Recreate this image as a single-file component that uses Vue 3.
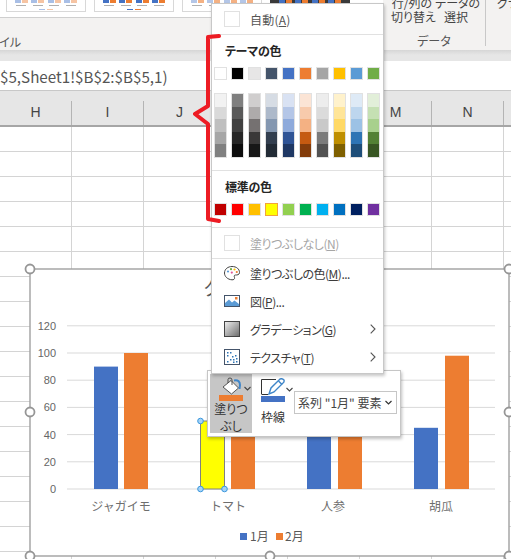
<script setup>
const thumbs = [
  { id: 1, dark: false, a: '#a9bfe6', b: '#f6c4a3' },
  { id: 2, dark: false, a: '#4472c4', b: '#ed7d31' },
  { id: 3, dark: false, a: '#b4c6e7', b: '#f4b183' },
  { id: 4, dark: true, a: '#4472c4', b: '#ed7d31' }
]
const pairs = [0, 1, 2, 3]
const columns = [
  { n: 'H', sep: true }, { n: 'I', sep: true }, { n: 'J', sep: true }, { n: 'K', sep: true },
  { n: 'L', sep: true }, { n: 'M', sep: true }, { n: 'N', sep: true }, { n: 'O', sep: false }
]
const themeColors = ['#ffffff', '#000000', '#e7e6e6', '#44546a', '#4472c4', '#ed7d31', '#a5a5a5', '#ffc000', '#5b9bd5', '#70ad47']
const shades = [
  ['#f2f2f2', '#d9d9d9', '#bfbfbf', '#a6a6a6', '#808080'],
  ['#7f7f7f', '#595959', '#404040', '#262626', '#0d0d0d'],
  ['#d0cece', '#aeabab', '#757171', '#3a3838', '#171717'],
  ['#d6dce4', '#adb9ca', '#8497b0', '#333f4f', '#222b35'],
  ['#d9e2f3', '#b4c6e7', '#8eaadb', '#2f5496', '#1f3864'],
  ['#fbe4d5', '#f7caac', '#f4b183', '#c55a11', '#833c0b'],
  ['#ededed', '#dbdbdb', '#c9c9c9', '#7b7b7b', '#525252'],
  ['#fff2cc', '#ffe598', '#ffd966', '#bf8f00', '#7f6000'],
  ['#deeaf6', '#bdd6ee', '#9cc2e5', '#2e75b5', '#1e4e79'],
  ['#e2efd9', '#c5e0b3', '#a8d08d', '#538135', '#385623']
]
const standard = ['#c00000', '#ff0000', '#ffc000', '#ffff00', '#92d050', '#00b050', '#00b0f0', '#0070c0', '#002060', '#7030a0']
const ticks = [120, 100, 80, 60, 40, 20, 0]
const y = v => 489 - v * 1.36
const cats = [
  { name: 'ジャガイモ', cx: 121, ax: 94, bx: 124, a: 90, b: 100 },
  { name: 'トマト', cx: 228, ax: 200.5, bx: 231, a: 50, b: 60 },
  { name: '人参', cx: 333, ax: 307, bx: 338, a: 80, b: 65 },
  { name: '胡瓜', cx: 441, ax: 414, bx: 445, a: 45, b: 98 }
]
const handles = [[30, 269], [30, 412], [30, 556], [270, 556], [509, 269], [509, 412], [509, 556]]
</script>

<template>
  <div class="page">
    <header class="ribbon">
      <div class="ribbon-left">
        <div class="gallery">
          <div v-for="t in thumbs" :key="t.id" class="thumb" :class="{ dark: t.dark }">
            <div class="bars">
              <div v-for="p in pairs" :key="p" class="pair">
                <i :style="{ background: t.a }"></i><i :style="{ background: t.b }"></i>
              </div>
            </div>
            <div class="axis">
              <b v-for="p in pairs" :key="p"></b>
            </div>
            <div class="legend-mini">
              <i :style="{ background: t.a }"></i><i :style="{ background: t.b }"></i>
            </div>
          </div>
        </div>
        <div class="group-label left-label">スタイル</div>
      </div>
      <div class="data-group">
        <div class="cmds">
          <div class="cmd">行/列の<br />切り替え</div>
          <div class="cmd">データの<br />選択</div>
        </div>
        <div class="group-label">データ</div>
      </div>
      <div class="chart-group">グラフの種類<br />の変更</div>
    </header>
    <div class="ribbon-shadow"></div>
    <div class="formula">$5,Sheet1!$B$2:$B$5,1)</div>
    <div class="colhead">
      <div v-for="c in columns" :key="c.n" class="colname" :class="{ sep: c.sep }">{{ c.n }}</div>
    </div>
    <div class="sheet"></div>

    <svg class="chart" viewBox="30 269 479 287" width="479" height="287">
      <rect x="30" y="269" width="479" height="287" fill="#fff" stroke="#a0a0a0" stroke-width="1.4" />
      <text x="204" y="295" class="title">グラフ タイトル</text>
      <g v-for="t in ticks" :key="t">
        <line x1="67" x2="495" :y1="y(t)" :y2="y(t)" stroke="#d9d9d9" stroke-width="1" />
        <text x="56" :y="y(t) + 4" text-anchor="end" class="tick">{{ t }}</text>
      </g>
      <g v-for="(c, i) in cats" :key="c.name">
        <rect :x="c.ax" :y="y(c.a)" width="24" :height="c.a * 1.36" :fill="i === 1 ? '#ffff00' : '#4472c4'"
          :stroke="i === 1 ? '#808080' : 'none'" />
        <rect :x="c.bx" :y="y(c.b)" width="24" :height="c.b * 1.36" fill="#ed7d31" />
        <text :x="c.cx" y="511" text-anchor="middle" class="cat">{{ c.name }}</text>
      </g>
      <rect x="240" y="533" width="7" height="7" fill="#4472c4" />
      <text x="250" y="541" class="cat legend-text">1月</text>
      <rect x="276" y="533" width="7" height="7" fill="#ed7d31" />
      <text x="285" y="541" class="cat legend-text">2月</text>
      <circle v-for="(h, i) in handles" :key="i" :cx="h[0]" :cy="h[1]" r="4.5" fill="#fff" stroke="#969696" stroke-width="1.8" />
      <circle cx="200.5" cy="421" r="2.8" fill="#a5d3f8" stroke="#3b98dc" />
      <circle cx="200.5" cy="489" r="2.8" fill="#a5d3f8" stroke="#3b98dc" />
      <circle cx="224.5" cy="489" r="2.8" fill="#a5d3f8" stroke="#3b98dc" />
    </svg>

    <div class="minibar">
      <div class="fillbtn">
        <div class="iconline fill-icon">
          <svg width="22" height="18" viewBox="0 0 22 18">
            <path d="M2 10 L10 3.5 L17.5 11 L10.5 17 Z" fill="#fff" stroke="#444" stroke-width=".9" />
            <path d="M7 6 V2.5 Q7 1 9 1 Q11 1 11 3 V8" fill="none" stroke="#444" stroke-width=".9" />
            <path d="M13 3.5 Q19 2.5 19 8 L18.5 12" fill="none" stroke="#3f86c9" stroke-width="2" />
          </svg>
          <svg class="chev" width="7" height="5" viewBox="0 0 7 5"><path d="M.5 1 L3.5 4 L6.5 1" fill="none" stroke="#444" stroke-width="1.1" /></svg>
        </div>
        <div class="colorbar orange"></div>
        <div class="btn-text fill-text">塗りつ<br />ぶし</div>
      </div>
      <div class="linebtn">
        <div class="iconline">
          <svg width="24" height="17" viewBox="0 0 24 17">
            <path d="M.5 16 V1.5 H15 M.5 16.5 H7" fill="none" stroke="#333" stroke-width="1" />
            <path d="M8 16 L10 10 L19 1 Q21 0 23 2 Q23.5 4 22 5 L13 14 Z" fill="#fff" stroke="#3f86c9" stroke-width="1.4" />
            <path d="M17.5 3 L21 6.5" stroke="#3f86c9" stroke-width="1.4" />
          </svg>
          <svg class="chev" width="7" height="5" viewBox="0 0 7 5"><path d="M.5 1 L3.5 4 L6.5 1" fill="none" stroke="#444" stroke-width="1.1" /></svg>
        </div>
        <div class="colorbar blue"></div>
        <div class="btn-text line-label">枠線</div>
      </div>
      <div class="series">
        <span>系列 "1月" 要素</span>
        <svg width="7" height="5" viewBox="0 0 7 5"><path d="M.5 1 L3.5 4 L6.5 1" fill="none" stroke="#333" stroke-width="1.2" /></svg>
      </div>
    </div>

    <div class="menu">
      <div class="row auto first">
        <span class="blank"></span><span>自動(<u>A</u>)</span>
      </div>
      <div class="rule"></div>
      <div class="heading">テーマの色</div>
      <div class="swatches">
        <span v-for="c in themeColors" :key="c" class="swatch" :style="{ background: c }"></span>
      </div>
      <div class="shades">
        <div v-for="(col, i) in shades" :key="i" class="shade-col">
          <span v-for="s in col" :key="s" :style="{ background: s }"></span>
        </div>
      </div>
      <div class="rule rule-after-shades"></div>
      <div class="heading">標準の色</div>
      <div class="swatches">
        <span v-for="c in standard" :key="c" class="swatch" :class="{ picked: c === '#ffff00' }" :style="{ background: c }"></span>
      </div>
      <div class="rule rule-after-std"></div>
      <div class="row auto disabled">
        <span class="blank"></span><span>塗りつぶしなし(<u>N</u>)</span>
      </div>
      <div class="rule"></div>
      <div class="row">
        <svg width="16" height="16" viewBox="0 0 16 16">
          <path d="M8 1.5 C12.5 1.5 15.5 4 15.5 7.5 C15.5 10 13 10 11.5 10 C10 10 10 11.5 10.5 12.5 C11 14 9.5 15 8 14.8 C3.5 14.5 .5 11.5 .5 8 C.5 4 4 1.5 8 1.5 Z" fill="#fff" stroke="#444" stroke-width="1" />
          <circle cx="4" cy="6.5" r="1.1" fill="#5b9bd5" /><circle cx="7" cy="4.2" r="1.1" fill="#70ad47" />
          <circle cx="10.5" cy="4.5" r="1.1" fill="#ffc000" /><circle cx="12.8" cy="7" r="1.1" fill="#ed7d31" />
          <circle cx="7.8" cy="7.6" r="1.1" fill="#e0559b" />
        </svg>
        <span>塗りつぶしの色(<u>M</u>)...</span>
      </div>
      <div class="row">
        <svg width="16" height="16" viewBox="0 0 16 16">
          <rect x=".5" y="2.5" width="15" height="11" fill="#fff" stroke="#44546a" />
          <path d="M1 13 V10 L5 6.5 L8 9.5 L10.5 7.5 L15 11 V13 Z" fill="#5b9bd5" />
          <rect x="11" y="4" width="2.5" height="2.5" fill="#ed7d31" />
        </svg>
        <span>図(<u>P</u>)...</span>
      </div>
      <div class="row has-sub">
        <svg width="16" height="16" viewBox="0 0 16 16">
          <defs>
            <linearGradient id="grad" x1="0" y1="0" x2="1" y2="1">
              <stop offset="0" stop-color="#f2f2f2" /><stop offset="1" stop-color="#6b6b6b" />
            </linearGradient>
          </defs>
          <rect x=".5" y=".5" width="15" height="15" fill="url(#grad)" stroke="#444" />
        </svg>
        <span>グラデーション(<u>G</u>)</span>
        <svg class="sub" width="6" height="10" viewBox="0 0 6 10"><path d="M.7 .7 L5 5 L.7 9.3" fill="none" stroke="#555" stroke-width="1.1" /></svg>
      </div>
      <div class="row has-sub">
        <svg width="16" height="16" viewBox="0 0 16 16">
          <rect x=".5" y=".5" width="15" height="15" fill="#fff" stroke="#44546a" />
          <g fill="#2e75b5">
            <rect x="3" y="3" width="1.5" height="1.5" /><rect x="6" y="3" width="1.5" height="1.5" /><rect x="3" y="6" width="1.5" height="1.5" />
            <rect x="8" y="7" width="1.5" height="1.5" /><rect x="11" y="6" width="1.5" height="1.5" /><rect x="6" y="10" width="1.5" height="1.5" />
            <rect x="9" y="10" width="1.5" height="1.5" /><rect x="12" y="9" width="1.5" height="1.5" /><rect x="12" y="12" width="1.5" height="1.5" />
            <rect x="9" y="12.5" width="1.5" height="1.5" /><rect x="3" y="12" width="1.5" height="1.5" />
          </g>
        </svg>
        <span>テクスチャ(<u>T</u>)</span>
        <svg class="sub" width="6" height="10" viewBox="0 0 6 10"><path d="M.7 .7 L5 5 L.7 9.3" fill="none" stroke="#555" stroke-width="1.1" /></svg>
      </div>
    </div>

    <svg class="bracket" viewBox="0 0 30 190" width="30" height="190">
      <path d="M26 3 L15 4 L15 73 L2 81 L15 91 L15 186 L26 188" fill="none" stroke="#ed1c24" stroke-width="4" stroke-linejoin="round" stroke-linecap="round" />
    </svg>
  </div>
</template>

<style scoped>
.page {
  position: relative;
  width: 511px;
  height: 559px;
  overflow: hidden;
  background: #fff;
  display: flex;
  flex-direction: column;
  font-family: "Noto Sans CJK JP", "Noto Sans", sans-serif;
  font-feature-settings: "palt";
  color: #444;
  font-size: 12px;
}
.ribbon {
  height: 50px;
  flex: none;
  display: flex;
  background: #f3f2f1;
  overflow: hidden;
}
.ribbon-left {
  width: 383px;
  flex: none;
  overflow: hidden;
}
.gallery {
  height: 18px;
  box-sizing: border-box;
  background: #fff;
  border-bottom: 1px solid #cfcfcf;
  display: flex;
  gap: 8px;
  padding-left: 6px;
  overflow: hidden;
}
.thumb {
  width: 80px;
  height: 12px;
  box-sizing: border-box;
  background: #fff;
  border: 1px solid #d8d8d8;
  border-top: none;
  flex: none;
  overflow: hidden;
}
.thumb.dark {
  background: #3a3a3a;
  border-color: #3a3a3a;
  height: 6px;
}
.bars {
  display: flex;
  justify-content: space-around;
  padding: 0 6px;
}
.pair {
  display: flex;
  gap: 1px;
}
.pair i {
  display: block;
  width: 6px;
  height: 3px;
}
.axis {
  display: flex;
  justify-content: space-around;
  padding: 0 6px;
  margin-top: 2px;
}
.axis b {
  display: block;
  width: 10px;
  height: 1px;
  background: #b0b0b0;
}
.legend-mini {
  display: flex;
  justify-content: center;
  gap: 2px;
  margin-top: 3px;
}
.legend-mini i {
  display: block;
  width: 6px;
  height: 1px;
}
.group-label {
  font-size: 12px;
  line-height: 16px;
  text-align: center;
  color: #555;
}
.left-label {
  text-align: left;
  margin: 16px 0 0 -22px;
}
.data-group {
  width: 103px;
  height: 46px;
  flex: none;
  box-sizing: border-box;
  border-right: 1px solid #c8c8c8;
}
.cmds {
  display: flex;
  gap: 2px;
  padding-left: 8px;
  margin-top: -4px;
  height: 37px;
  line-height: 14px;
  font-size: 12px;
}
.cmd {
  width: 42px;
  flex: none;
  text-align: center;
  white-space: nowrap;
}
.chart-group {
  flex: none;
  padding-left: 11px;
  margin-top: -4px;
  line-height: 14px;
  white-space: nowrap;
  text-align: center;
}
.ribbon-shadow {
  height: 11px;
  flex: none;
  background: linear-gradient(#d6d6d6, #e6e6e6 45%);
}
.formula {
  height: 30px;
  flex: none;
  box-sizing: border-box;
  line-height: 30px;
  font-size: 15.2px;
  font-feature-settings: normal;
  background: #fff;
  border-bottom: 1px solid #c8c8c8;
  white-space: nowrap;
  color: #555;
  overflow: hidden;
}
.colhead {
  height: 36px;
  flex: none;
  box-sizing: border-box;
  display: flex;
  background: #e6e6e6;
  border-bottom: 2px solid #a6a6a6;
  align-items: flex-end;
}
.colname {
  width: 72px;
  flex: none;
  height: 24px;
  box-sizing: border-box;
  line-height: 22px;
  text-align: center;
  font-size: 14px;
  color: #444;
  font-family: "Liberation Sans", sans-serif;
}
.colname.sep {
  border-right: 1px solid #b4b4b4;
}
.sheet {
  flex: 1;
  background-color: #fff;
  background-image:
    repeating-linear-gradient(to right, transparent 0 71px, #d4d4d4 71px 72px),
    repeating-linear-gradient(to bottom, transparent 0 24px, #d4d4d4 24px 25px);
}
.chart {
  position: absolute;
  left: 30px;
  top: 269px;
  overflow: visible;
}
.title {
  font-size: 18px;
  fill: #595959;
}
.tick {
  font-family: "Liberation Sans", sans-serif;
  font-size: 11px;
  fill: #666;
}
.cat {
  font-size: 12px;
  font-feature-settings: normal;
  fill: #6e6e6e;
}
.legend-text {
  font-feature-settings: "palt";
  fill: #595959;
}
.minibar {
  position: absolute;
  left: 207px;
  top: 370px;
  width: 194px;
  height: 67px;
  box-sizing: border-box;
  background: #fff;
  border: 1px solid #c6c6c6;
  box-shadow: 1px 2px 3px rgba(0, 0, 0, .25);
  display: flex;
  padding: 3px 0 0 2px;
}
.fillbtn {
  width: 42px;
  height: 59px;
  flex: none;
  background: #c6c6c6;
  display: flex;
  flex-direction: column;
  align-items: center;
  padding-top: 3px;
  box-sizing: border-box;
}
.linebtn {
  width: 36px;
  height: 59px;
  flex: none;
  margin-left: 7px;
  display: flex;
  flex-direction: column;
  align-items: flex-start;
  padding: 4px 0 0 2px;
  box-sizing: border-box;
}
.iconline {
  height: 18px;
  display: flex;
  align-items: flex-start;
  gap: 1px;
}
.fill-icon {
  margin-left: 10px;
}
.chev {
  margin-top: 9px;
}
.colorbar {
  width: 24px;
  height: 6px;
  flex: none;
}
.orange {
  background: #ed7d31;
}
.blue {
  background: #4472c4;
}
.btn-text {
  line-height: 17px;
  text-align: center;
  font-size: 12px;
  color: #333;
  white-space: nowrap;
}
.fill-text {
  margin-top: -1px;
}
.line-label {
  margin-top: 6px;
  width: 24px;
}
.series {
  width: 103px;
  height: 23px;
  flex: none;
  margin: 17px 0 0 -1px;
  box-sizing: border-box;
  border: 1px solid #c6c6c6;
  display: flex;
  align-items: center;
  justify-content: space-between;
  padding: 0 4px 0 3px;
  white-space: nowrap;
  font-size: 12px;
  color: #444;
}
.menu {
  position: absolute;
  left: 211px;
  top: 3px;
  width: 173px;
  height: 371px;
  box-sizing: border-box;
  background: #fff;
  border: 1px solid #c8c8c8;
  box-shadow: 1px 2px 3px rgba(0, 0, 0, .22);
  padding-bottom: 2px;
}
.row {
  height: 28px;
  display: flex;
  align-items: center;
  gap: 10px;
  padding-left: 12px;
  white-space: nowrap;
  color: #3c3c3c;
  letter-spacing: -.5px;
}
.auto {
  height: 30px;
}
.first {
  letter-spacing: .2px;
  color: #555;
}
.disabled {
  color: #a6a6a6;
}
.has-sub {
  position: relative;
}
.sub {
  position: absolute;
  left: 158px;
  top: 9px;
}
.blank {
  width: 16px;
  height: 16px;
  box-sizing: border-box;
  border: 1px solid #e1e1e1;
  flex: none;
}
.rule {
  height: 1px;
  background: #e1e1e1;
}
.rule-after-shades {
  margin-top: 12px;
}
.rule-after-std {
  margin-top: 11px;
}
.heading {
  height: 32px;
  line-height: 32px;
  padding-left: 13px;
  font-weight: 700;
  color: #262626;
  letter-spacing: -.3px;
}
.swatches {
  display: grid;
  grid-template-columns: repeat(10, 13px);
  gap: 4px;
  padding-left: 2px;
}
.swatch {
  width: 13px;
  height: 13px;
  box-sizing: border-box;
  border: 1px solid #e1e1e1;
}
.swatch.picked {
  border-color: #f2a33c;
}
.shades {
  display: grid;
  grid-template-columns: repeat(10, 13px);
  gap: 4px;
  padding-left: 2px;
  margin-top: 13px;
}
.shade-col {
  height: 65px;
  box-sizing: border-box;
  border: 1px solid #e1e1e1;
  display: flex;
  flex-direction: column;
}
.shade-col span {
  flex: 1;
}
.bracket {
  position: absolute;
  left: 193px;
  top: 33px;
}
</style>

<style>
body {
  margin: 0;
}
</style>
